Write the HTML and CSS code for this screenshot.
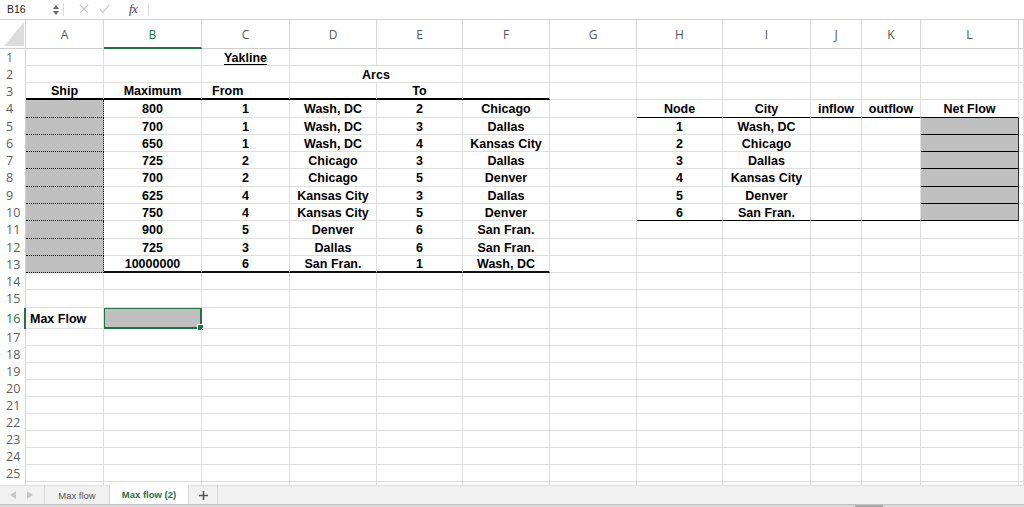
FILE: index.html
```html
<!DOCTYPE html>
<html>
<head>
<meta charset="utf-8">
<link rel="stylesheet" href="styles.css">
</head>
<body>
<div class="app">
  <div class="fbar">
    <div class="namebox">B16</div>
    <div class="spin"><svg width="6" height="10" viewBox="0 0 6 10"><path d="M0 4 L3 0 L6 4 Z M0 6 L3 10 L6 6 Z" fill="#666"/></svg></div>
    <div class="sep"></div>
    <div class="fbtn first">
      <svg width="10" height="10" viewBox="0 0 10 10"><path d="M1 1 L9 9 M9 1 L1 9" stroke="#c4c4c4" stroke-width="1.2"/></svg>
    </div>
    <div class="fbtn">
      <svg width="11" height="10" viewBox="0 0 11 10"><path d="M1 5.5 L4 8.5 L10 1" stroke="#c4c4c4" stroke-width="1.2" fill="none"/></svg>
    </div>
    <div class="fx">fx</div>
    <div class="sep"></div>
  </div>

  <div class="sheet">
    <div class="row hdr">
      <div class="corner"><svg width="20" height="24" viewBox="0 0 20 24"><path d="M20 0 L20 24 L0 24 Z" fill="#dcdcdc"/></svg></div>
      <div class="ch">A</div><div class="ch sel">B</div><div class="ch">C</div><div class="ch">D</div><div class="ch">E</div><div class="ch">F</div><div class="ch">G</div><div class="ch">H</div><div class="ch">I</div><div class="ch">J</div><div class="ch">K</div><div class="ch">L</div><div class="ch"></div>
    </div>

    <div class="row h17">
      <div class="rh">1</div>
      <div class="c"></div><div class="c"></div><div class="c b u">Yakline</div><div class="c"></div><div class="c"></div><div class="c"></div><div class="c"></div><div class="c"></div><div class="c"></div><div class="c"></div><div class="c"></div><div class="c"></div><div class="c"></div>
    </div>
    <div class="row h17">
      <div class="rh">2</div>
      <div class="c"></div><div class="c"></div><div class="c"></div><div class="c b span2">Arcs</div><div class="c"></div><div class="c"></div><div class="c"></div><div class="c"></div><div class="c"></div><div class="c"></div><div class="c"></div><div class="c"></div>
    </div>
    <div class="row h17">
      <div class="rh">3</div>
      <div class="c b thick">Ship</div><div class="c b thick">Maximum</div><div class="c b thick left">From</div><div class="c thick"></div><div class="c b thick">To</div><div class="c thick"></div><div class="c"></div><div class="c"></div><div class="c"></div><div class="c"></div><div class="c"></div><div class="c"></div><div class="c"></div>
    </div>
    <div class="row h18">
      <div class="rh">4</div>
      <div class="c gray dot"></div><div class="c b">800</div><div class="c b">1</div><div class="c b">Wash, DC</div><div class="c b">2</div><div class="c b">Chicago</div><div class="c"></div><div class="c b tb">Node</div><div class="c b tb">City</div><div class="c b tb">inflow</div><div class="c b tb">outflow</div><div class="c b tb">Net Flow</div><div class="c"></div>
    </div>
    <div class="row h17">
      <div class="rh">5</div>
      <div class="c gray dot"></div><div class="c b">700</div><div class="c b">1</div><div class="c b">Wash, DC</div><div class="c b">3</div><div class="c b">Dallas</div><div class="c"></div><div class="c b">1</div><div class="c b">Wash, DC</div><div class="c"></div><div class="c"></div><div class="c nf"></div><div class="c"></div>
    </div>
    <div class="row h17">
      <div class="rh">6</div>
      <div class="c gray dot"></div><div class="c b">650</div><div class="c b">1</div><div class="c b">Wash, DC</div><div class="c b">4</div><div class="c b">Kansas City</div><div class="c"></div><div class="c b">2</div><div class="c b">Chicago</div><div class="c"></div><div class="c"></div><div class="c nf"></div><div class="c"></div>
    </div>
    <div class="row h17">
      <div class="rh">7</div>
      <div class="c gray dot"></div><div class="c b">725</div><div class="c b">2</div><div class="c b">Chicago</div><div class="c b">3</div><div class="c b">Dallas</div><div class="c"></div><div class="c b">3</div><div class="c b">Dallas</div><div class="c"></div><div class="c"></div><div class="c nf"></div><div class="c"></div>
    </div>
    <div class="row h18">
      <div class="rh">8</div>
      <div class="c gray dot"></div><div class="c b">700</div><div class="c b">2</div><div class="c b">Chicago</div><div class="c b">5</div><div class="c b">Denver</div><div class="c"></div><div class="c b">4</div><div class="c b">Kansas City</div><div class="c"></div><div class="c"></div><div class="c nf"></div><div class="c"></div>
    </div>
    <div class="row h17">
      <div class="rh">9</div>
      <div class="c gray dot"></div><div class="c b">625</div><div class="c b">4</div><div class="c b">Kansas City</div><div class="c b">3</div><div class="c b">Dallas</div><div class="c"></div><div class="c b">5</div><div class="c b">Denver</div><div class="c"></div><div class="c"></div><div class="c nf"></div><div class="c"></div>
    </div>
    <div class="row h17">
      <div class="rh">10</div>
      <div class="c gray dot"></div><div class="c b">750</div><div class="c b">4</div><div class="c b">Kansas City</div><div class="c b">5</div><div class="c b">Denver</div><div class="c"></div><div class="c b tbb">6</div><div class="c b tbb">San Fran.</div><div class="c tbb"></div><div class="c tbb"></div><div class="c nf"></div><div class="c"></div>
    </div>
    <div class="row h18">
      <div class="rh">11</div>
      <div class="c gray dot"></div><div class="c b">900</div><div class="c b">5</div><div class="c b">Denver</div><div class="c b">6</div><div class="c b">San Fran.</div><div class="c"></div><div class="c"></div><div class="c"></div><div class="c"></div><div class="c"></div><div class="c"></div><div class="c"></div>
    </div>
    <div class="row h17">
      <div class="rh">12</div>
      <div class="c gray dot"></div><div class="c b">725</div><div class="c b">3</div><div class="c b">Dallas</div><div class="c b">6</div><div class="c b">San Fran.</div><div class="c"></div><div class="c"></div><div class="c"></div><div class="c"></div><div class="c"></div><div class="c"></div><div class="c"></div>
    </div>
    <div class="row h17">
      <div class="rh">13</div>
      <div class="c gray dot"></div><div class="c b bb">10000000</div><div class="c b bb">6</div><div class="c b bb">San Fran.</div><div class="c b bb">1</div><div class="c b bb">Wash, DC</div><div class="c"></div><div class="c"></div><div class="c"></div><div class="c"></div><div class="c"></div><div class="c"></div><div class="c"></div>
    </div>
    <div class="row h17">
      <div class="rh">14</div>
      <div class="c"></div><div class="c"></div><div class="c"></div><div class="c"></div><div class="c"></div><div class="c"></div><div class="c"></div><div class="c"></div><div class="c"></div><div class="c"></div><div class="c"></div><div class="c"></div><div class="c"></div>
    </div>
    <div class="row h18">
      <div class="rh">15</div>
      <div class="c"></div><div class="c"></div><div class="c"></div><div class="c"></div><div class="c"></div><div class="c"></div><div class="c"></div><div class="c"></div><div class="c"></div><div class="c"></div><div class="c"></div><div class="c"></div><div class="c"></div>
    </div>
    <div class="row h21">
      <div class="rh selr">16</div>
      <div class="c b left pad4">Max Flow</div><div class="c active"><span class="handle"></span></div><div class="c"></div><div class="c"></div><div class="c"></div><div class="c"></div><div class="c"></div><div class="c"></div><div class="c"></div><div class="c"></div><div class="c"></div><div class="c"></div><div class="c"></div>
    </div>
    <div class="row h17">
      <div class="rh">17</div>
      <div class="c"></div><div class="c"></div><div class="c"></div><div class="c"></div><div class="c"></div><div class="c"></div><div class="c"></div><div class="c"></div><div class="c"></div><div class="c"></div><div class="c"></div><div class="c"></div><div class="c"></div>
    </div>
    <div class="row h17">
      <div class="rh">18</div>
      <div class="c"></div><div class="c"></div><div class="c"></div><div class="c"></div><div class="c"></div><div class="c"></div><div class="c"></div><div class="c"></div><div class="c"></div><div class="c"></div><div class="c"></div><div class="c"></div><div class="c"></div>
    </div>
    <div class="row h17">
      <div class="rh">19</div>
      <div class="c"></div><div class="c"></div><div class="c"></div><div class="c"></div><div class="c"></div><div class="c"></div><div class="c"></div><div class="c"></div><div class="c"></div><div class="c"></div><div class="c"></div><div class="c"></div><div class="c"></div>
    </div>
    <div class="row h17">
      <div class="rh">20</div>
      <div class="c"></div><div class="c"></div><div class="c"></div><div class="c"></div><div class="c"></div><div class="c"></div><div class="c"></div><div class="c"></div><div class="c"></div><div class="c"></div><div class="c"></div><div class="c"></div><div class="c"></div>
    </div>
    <div class="row h17">
      <div class="rh">21</div>
      <div class="c"></div><div class="c"></div><div class="c"></div><div class="c"></div><div class="c"></div><div class="c"></div><div class="c"></div><div class="c"></div><div class="c"></div><div class="c"></div><div class="c"></div><div class="c"></div><div class="c"></div>
    </div>
    <div class="row h17">
      <div class="rh">22</div>
      <div class="c"></div><div class="c"></div><div class="c"></div><div class="c"></div><div class="c"></div><div class="c"></div><div class="c"></div><div class="c"></div><div class="c"></div><div class="c"></div><div class="c"></div><div class="c"></div><div class="c"></div>
    </div>
    <div class="row h17">
      <div class="rh">23</div>
      <div class="c"></div><div class="c"></div><div class="c"></div><div class="c"></div><div class="c"></div><div class="c"></div><div class="c"></div><div class="c"></div><div class="c"></div><div class="c"></div><div class="c"></div><div class="c"></div><div class="c"></div>
    </div>
    <div class="row h17">
      <div class="rh">24</div>
      <div class="c"></div><div class="c"></div><div class="c"></div><div class="c"></div><div class="c"></div><div class="c"></div><div class="c"></div><div class="c"></div><div class="c"></div><div class="c"></div><div class="c"></div><div class="c"></div><div class="c"></div>
    </div>
    <div class="row h17">
      <div class="rh">25</div>
      <div class="c"></div><div class="c"></div><div class="c"></div><div class="c"></div><div class="c"></div><div class="c"></div><div class="c"></div><div class="c"></div><div class="c"></div><div class="c"></div><div class="c"></div><div class="c"></div><div class="c"></div>
    </div>
    <div class="row h17">
      <div class="rh">26</div>
      <div class="c"></div><div class="c"></div><div class="c"></div><div class="c"></div><div class="c"></div><div class="c"></div><div class="c"></div><div class="c"></div><div class="c"></div><div class="c"></div><div class="c"></div><div class="c"></div><div class="c"></div>
    </div>
  </div>

  <div class="tabs">
    <div class="nav">
      <svg width="6" height="8" viewBox="0 0 6 8"><path d="M6 0 L0 4 L6 8 Z" fill="#c8c8c8"/></svg>
      <svg width="6" height="8" viewBox="0 0 6 8"><path d="M0 0 L6 4 L0 8 Z" fill="#c8c8c8"/></svg>
    </div>
    <div class="tab">Max flow</div>
    <div class="tab active-tab">Max flow (2)</div>
    <div class="tab plus">
      <svg width="9" height="9" viewBox="0 0 9 9"><path d="M4.5 0 V9 M0 4.5 H9" stroke="#555" stroke-width="1.6"/></svg>
    </div>
  </div>
  <div class="bottom"><div class="thumb"></div></div>
</div>
</body>
</html>
```

FILE: styles.css
```css
* { box-sizing: border-box; }
html, body { margin: 0; padding: 0; }
body {
  width: 1024px;
  height: 507px;
  overflow: hidden;
  background: #fff;
  font-family: "Liberation Sans", Arial, sans-serif;
}
.app {
  display: flex;
  flex-direction: column;
  height: 507px;
}

/* formula bar */
.fbar {
  height: 20px;
  flex: none;
  display: flex;
  align-items: center;
  border-bottom: 1px solid #d2d2d2;
  padding-bottom: 1px;
}
.namebox {
  width: 53px;
  padding-left: 7px;
  font-size: 10.5px;
  color: #222;
}
.spin {
  width: 10px;
  display: flex;
  align-items: center;
  padding-top: 1px;
}
.sep {
  width: 1px;
  height: 13px;
  background: #dcdcdc;
}
.fbtn {
  width: 21px;
  display: flex;
  justify-content: center;
  align-items: center;
}
.fbtn.first { margin-left: 9px; }
.fx {
  width: 33px;
  padding-left: 14px;
  font-family: "Liberation Serif", "Times New Roman", serif;
  font-style: italic;
  font-size: 13px;
  color: #444;
  letter-spacing: -0.5px;
}

/* sheet */
.sheet {
  flex: 1;
  overflow: hidden;
}
.row {
  display: grid;
  grid-template-columns: 26px 78px 98px 88px 87px 86px 87px 87px 86px 88px 51px 59px 98px 1fr;
}
.hdr { height: 29px; }
.h17 { height: 17px; }
.h18 { height: 18px; }
.h21 { height: 21px; }

.corner {
  border-right: 1px solid #d4d4d4;
  border-bottom: 1px solid #cfcfcf;
  display: flex;
  align-items: flex-end;
  justify-content: flex-end;
  padding: 0 1px 2px 0;
}
.ch {
  border-right: 1px solid #d8d8d8;
  border-bottom: 1px solid #cfcfcf;
  display: flex;
  align-items: center;
  justify-content: center;
  font-family: "Open Sans", "Liberation Sans", sans-serif;
  font-size: 12px;
  color: #555;
  padding-top: 1px;
}
.ch.sel {
  color: #217346;
  border-bottom: 2px solid #217346;
}
.rh {
  border-right: 1px solid #d4d4d4;
  font-family: "Open Sans", "Liberation Sans", sans-serif;
  font-size: 12.5px;
  color: #5e5e5e;
  padding-left: 6px;
  padding-top: 1px;
  display: flex;
  align-items: center;
  line-height: 1;
}
.rh.selr {
  color: #217346;
  border-right: 2px solid #217346;
}
.c {
  border-right: 1px solid #dedede;
  border-bottom: 1px solid #dedede;
  display: flex;
  align-items: center;
  justify-content: center;
  padding-top: 2px;
  font-size: 12.5px;
  color: #000;
  white-space: nowrap;
  line-height: 1;
  position: relative;
}
.b { font-weight: bold; }
.u { text-decoration: underline; text-underline-offset: 2px; }
.left { justify-content: flex-start; padding-left: 10px; }
.pad4 { padding-left: 4px; }
.span2 { grid-column: span 2; }
.thick { border-bottom: 2px solid #000; }
.gray { background: #c0c0c0; }
.dot {
  border-right: 1px dotted #000;
  border-bottom: 1px dotted #000;
}
.bb { border-bottom: 2px solid #111; }
.tb { border-bottom: 1px solid #000; }
.tbb { border-bottom: 1px solid #000; }
.nf {
  background: #c0c0c0;
  border-bottom: 1px solid #000;
  border-right: 1px solid #333;
}
.active {
  background: #c0c0c0;
  border: 2px solid #217346;
  border-top: 1px solid #217346;
  border-left: 1px solid #217346;
}
.handle {
  position: absolute;
  right: -4px;
  bottom: -4px;
  width: 5px;
  height: 5px;
  background: #217346;
  border: 1px solid #fff;
  box-sizing: content-box;
}

/* tabs */
.tabs {
  height: 19px;
  flex: none;
  display: flex;
  background: #f1f1f1;
  border-top: 1px solid #e0e0e0;
  font-family: "Liberation Sans", Arial, sans-serif;
  font-size: 9.5px;
}
.nav {
  width: 45px;
  display: flex;
  align-items: center;
  gap: 11px;
  padding-left: 10px;
  border-right: 1px solid #d6d6d6;
}
.tab {
  display: flex;
  align-items: center;
  justify-content: center;
  color: #555;
  border-right: 1px solid #d6d6d6;
  width: 65px;
}
.active-tab {
  background: #fff;
  color: #217346;
  font-weight: bold;
  width: 79px;
  margin-top: -1px;
}
.plus { width: 29px; }
.bottom {
  height: 3px;
  flex: none;
  background: #d8d8d8;
  border-top: 1px solid #c2c2c2;
  position: relative;
}
.thumb {
  position: absolute;
  left: 855px;
  top: 0;
  width: 28px;
  height: 2px;
  background: #a8a8a8;
}
```
